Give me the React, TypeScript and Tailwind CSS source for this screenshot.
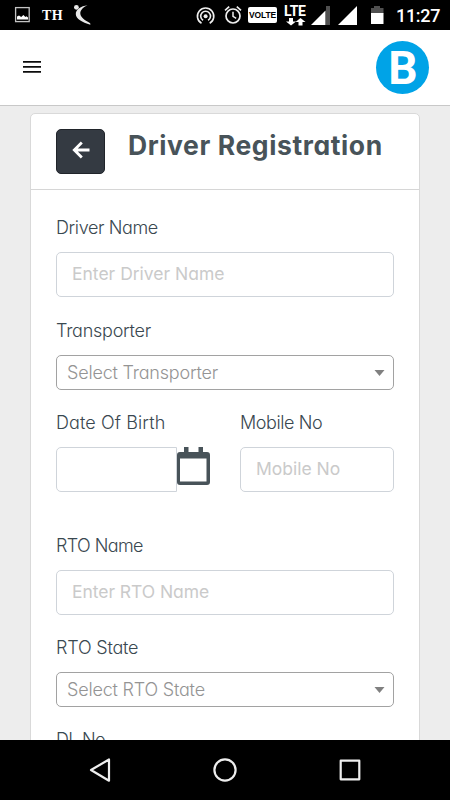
import type { ReactNode } from "react";

type FieldProps = {
  label: string;
  tracking: string;
  className?: string;
  children?: ReactNode;
};

function Field({ label, tracking, className = "", children }: FieldProps) {
  return (
    <div className={className}>
      <label className={`block h-6 whitespace-nowrap pt-px text-[18px] leading-6 font-light text-[#3a4850] ${tracking}`}>
        {label}
      </label>
      {children}
    </div>
  );
}

function TextInput({ placeholder, tracking }: { placeholder: string; tracking: string }) {
  return (
    <div
      className={`mt-[13px] flex h-[45px] items-center rounded-[5px] border border-[#cfd4da] bg-white pl-[15px] text-[17.5px] whitespace-nowrap text-[#cacaca] ${tracking}`}
    >
      {placeholder}
    </div>
  );
}

function Select({ placeholder, tracking }: { placeholder: string; tracking: string }) {
  return (
    <div className="mt-[13px] flex h-[35px] items-center justify-between rounded-[5px] border border-[#a2a2a2] bg-white pr-[8px] pl-[10px]">
      <span className={`text-[18px] leading-6 font-light whitespace-nowrap text-[#949494] ${tracking}`}>{placeholder}</span>
      <svg width="11" height="6" viewBox="0 0 11 6" fill="#808080">
        <path d="M.5 0h10L5.5 6z" />
      </svg>
    </div>
  );
}

function StatusBar() {
  return (
    <div className="flex h-[30px] shrink-0 bg-black text-white">
      <svg width="40" height="30" viewBox="0 0 40 30" className="shrink-0">
        <rect x="15.6" y="7.6" width="13.6" height="14" fill="none" stroke="#c4c4c4" strokeWidth="1.3" />
        <path d="M17 19.5v-3l2-1 2.2 1.4 2.2-2 2 2 1-.7 1.6 1.3v2z" fill="#fff" />
      </svg>
      <span className="w-[32px] pl-[2px] font-['Liberation_Serif',serif] text-[14px] leading-[31px] font-bold tracking-[0.5px]">TH</span>
      <svg width="22" height="30" viewBox="72 0 22 30" className="shrink-0" fill="#e8e8e8">
        <circle cx="76.4" cy="7.3" r="2.4" />
        <path d="M87.5 5.2C81 6 75.5 9.5 75.8 14.2c.3 4.6 6.2 7.8 14.6 10.6l-.2-1.6c-5.2-2.700-9.700-5.600-9.900-9.600-.1-3.600 3-6.600 7.200-8.400z" />
      </svg>
      <svg width="52" height="30" viewBox="194 0 52 30" className="ml-[100px] shrink-0" fill="none" stroke="#eee">
        <path d="M201.5 23.3a8.2 8.2 0 1 1 8.2 0" strokeWidth="1.6" />
        <path d="M203.1 20.3a4.9 4.9 0 1 1 5 0" strokeWidth="1.6" />
        <circle cx="205.6" cy="16.2" r="2" fill="#eee" stroke="none" />
        <circle cx="233" cy="16" r="7" strokeWidth="1.7" />
        <path d="M233 11.8V16.4l3.2 2" strokeWidth="1.5" />
        <path d="M225 10.3l4.2-3.6M241 10.3l-4.2-3.6" strokeWidth="1.7" />
      </svg>
      <span className="mt-[7px] ml-[2px] h-4 w-[29px] rounded-[2px] bg-white text-center font-['Liberation_Sans',sans-serif] text-[8.5px] leading-4 font-bold tracking-[-0.1px] text-black">
        VOLTE
      </span>
      <div className="ml-[7px] flex w-[22px] shrink-0 flex-col pt-[4px] font-['Roboto',sans-serif]">
        <span className="h-[13px] text-[14px] leading-[15px] font-bold tracking-[-0.3px]">LTE</span>
        <svg width="22" height="9" viewBox="0 0 22 9" fill="#fff">
          <path d="M5 1h4v3.5h3L7 8.5 2 4.5h3zM14.5 8.5h4V5h3l-5-4-5 4h3z" />
        </svg>
      </div>
      <svg width="84" height="30" viewBox="307 0 84 30" className="ml-[1px] shrink-0">
        <path d="M326 6h4v19h-4z" fill="#505050" />
        <path d="M325.5 10.5V25H311z" fill="#fff" />
        <path d="M357 6v19h-19z" fill="#fff" />
        <path d="M371 8h3V6h6v2h3.5v5.5H371z" fill="#505050" />
        <path d="M371 13h12.5v11H371z" fill="#fff" />
      </svg>
      <span className="pl-[5px] font-['Roboto',sans-serif] text-[18px] leading-[32px] font-medium tracking-[-0.3px]">11:27</span>
    </div>
  );
}

function AppHeader() {
  return (
    <header className="flex h-[76px] shrink-0 items-center justify-between border-b border-[#c8c8c8] bg-white pr-[21px] pb-px pl-[23px]">
      <svg width="18" height="12" viewBox="0 0 18 12" fill="#0c0c0c">
        <path d="M0 0h18v1.7H0zM0 5h18v1.7H0zM0 10h18v1.7H0z" />
      </svg>
      <div className="flex size-[53px] items-center justify-center rounded-full bg-[#00a3e7] pt-[2px] pl-px font-['Roboto',sans-serif] text-[46px] leading-none font-bold text-white">
        B
      </div>
    </header>
  );
}

function NavBar() {
  return (
    <nav className="h-[60px] shrink-0 bg-black">
      <svg width="450" height="60" viewBox="0 0 450 60" fill="none" stroke="#eee" strokeWidth="2.2" strokeLinejoin="round">
        <path d="M109 19.5v21.2L91 30z" />
        <circle cx="225" cy="30" r="10.6" />
        <rect x="340.7" y="20.7" width="18.6" height="18.6" />
      </svg>
    </nav>
  );
}

export default function App() {
  return (
    <div className="flex h-[800px] w-[450px] flex-col overflow-hidden bg-[#ededed] font-['Inter',sans-serif] [font-feature-settings:'cv11']">
      <StatusBar />
      <AppHeader />
      <main className="min-h-0 flex-1 overflow-hidden px-[30px] pt-[7px]">
        <div className="h-[700px] rounded-[5px] border border-[#d9d9d9] bg-white">
          <div className="flex h-[76px] border-b border-[#d6d6d6] pt-[15px] pl-[25px]">
            <button
              type="button"
              aria-label="Back"
              className="flex h-[45px] w-[49px] shrink-0 items-center justify-center rounded-[5px] border border-[#20242a] bg-[#343a42] pb-[4px]"
            >
              <svg width="18" height="18" viewBox="0 0 18 18" fill="none" stroke="#fff" strokeWidth="2.8">
                <path d="M9.8 1.5L2.3 9l7.5 7.5M2.3 9h15.2" />
              </svg>
            </button>
            <h1 className="pl-[23px] text-[26.5px] leading-[32px] font-bold tracking-[0.6px] whitespace-nowrap text-[#485359]">
              Driver Registration
            </h1>
          </div>
          <div className="px-[25px] pt-[25px]">
            <Field label="Driver Name" tracking="tracking-[-0.38px]">
              <TextInput placeholder="Enter Driver Name" tracking="tracking-[0px]" />
            </Field>
            <Field label="Transporter" tracking="tracking-[-0.25px]" className="mt-[21px]">
              <Select placeholder="Select Transporter" tracking="tracking-[-0.2px]" />
            </Field>
            <div className="mt-[20px] flex gap-[30px]">
              <Field label="Date Of Birth" tracking="tracking-[0.1px]" className="w-[154px]">
                <div className="mt-[13px] flex">
                  <div className="h-[45px] w-[121px] rounded-l-[5px] border border-[#cfd4da] bg-white" />
                  <svg width="33" height="38" viewBox="0 0 33 38" fill="#485359" className="shrink-0">
                    <path
                      fillRule="evenodd"
                      d="M7 0h4.5v5h10V0H26v5h4a3 3 0 0 1 3 3v27a3 3 0 0 1-3 3H3a3 3 0 0 1-3-3V8a3 3 0 0 1 3-3h4zM3 11.5V34.5H29.5V11.5z"
                    />
                  </svg>
                </div>
              </Field>
              <Field label="Mobile No" tracking="tracking-[-0.42px]" className="w-[154px]">
                <TextInput placeholder="Mobile No" tracking="tracking-[0px]" />
              </Field>
            </div>
            <Field label="RTO Name" tracking="tracking-[-0.6px]" className="mt-[41px]">
              <TextInput placeholder="Enter RTO Name" tracking="tracking-[-0.05px]" />
            </Field>
            <Field label="RTO State" tracking="tracking-[-0.2px]" className="mt-[20px]">
              <Select placeholder="Select RTO State" tracking="tracking-[-0.2px]" />
            </Field>
            <Field label="DL No" tracking="tracking-[-0.7px]" className="mt-[20px]" />
          </div>
        </div>
      </main>
      <NavBar />
    </div>
  );
}
